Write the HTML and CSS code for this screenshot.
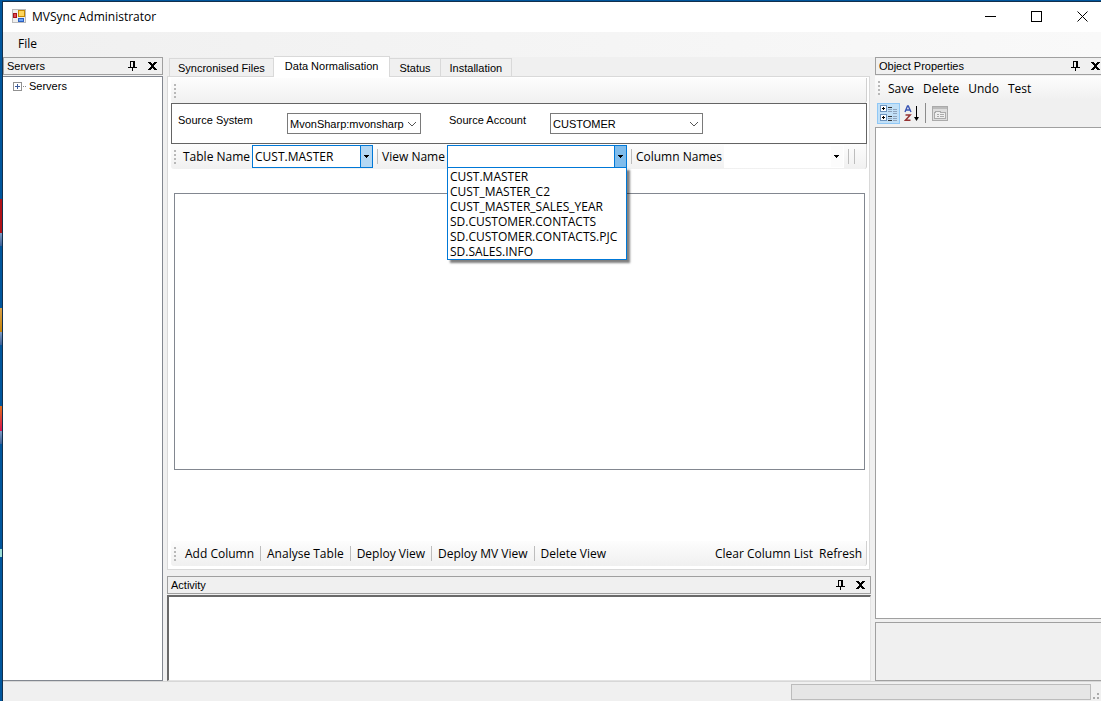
FILE: index.html
```html
<!DOCTYPE html>
<html lang="en">
<head>
    <meta charset="UTF-8">
    <title>MVSync Administrator</title>
    <link rel="stylesheet" href="styles.css">
</head>
<body>

<!-- shared icons -->
<svg class="defs" width="0" height="0">
    <symbol id="pin" viewBox="0 0 9 10" shape-rendering="crispEdges">
        <path d="M2 0h5v6h2v1H5v3H4V7H0V6h2zM3 1v5h2V1z" fill-rule="evenodd"/>
    </symbol>
    <symbol id="close" viewBox="0 0 9 8" shape-rendering="crispEdges">
        <path d="M0 0h3v1h1v1h1V1h1V0h3v1H8v1H7v1H6v2h1v1h1v1h1v1H6V7H5V6H4v1H3v1H0V7h1V6h1V5h1V3H2V2H1V1H0z"/>
    </symbol>
    <symbol id="chevron" viewBox="0 0 10 6">
        <path d="M1 1l4 4 4-4" fill="none" stroke="#555"/>
    </symbol>
    <symbol id="arrow" viewBox="0 0 5 3" shape-rendering="crispEdges">
        <path d="M0 0h5v1H4v1H3v1H2V2H1V1H0z"/>
    </symbol>
</svg>

<div class="window">
    <header class="titlebar">
        <svg class="logo" width="14" height="14" viewBox="0 0 14 14">
            <rect x=".5" y=".5" width="13" height="13" fill="#eee" stroke="#bbb"/>
            <rect x="6.500" y="1.500" width="6" height="6" fill="#ffd65c" stroke="#c58a00"/>
            <rect x="1.500" y="4.500" width="3" height="4" fill="#e0474f" stroke="#a5141b"/>
            <rect x="6.500" y="9.500" width="5" height="3" fill="#6ba4f5" stroke="#2a5fc0"/>
        </svg>
        <h1>MVSync Administrator</h1>
        <div class="win-buttons">
            <button aria-label="Minimize"><svg width="11" height="11" shape-rendering="crispEdges"><path d="M0 5h11v1H0z"/></svg></button>
            <button aria-label="Maximize"><svg width="11" height="11"><rect x=".5" y=".5" width="10" height="10" fill="none" stroke="#000"/></svg></button>
            <button aria-label="Close"><svg width="11" height="11"><path d="M.5 .5l10 10M10.500 .5l-10 10" stroke="#000"/></svg></button>
        </div>
    </header>

    <nav class="menubar"><button>File</button></nav>

    <main class="workspace">
        <section class="servers">
            <div class="dock-title">
                <h2>Servers</h2>
                <button aria-label="Pin"><svg width="9" height="10"><use href="#pin"/></svg></button>
                <button aria-label="Close"><svg width="9" height="8"><use href="#close"/></svg></button>
            </div>
            <ul class="tree">
                <li>
                    <svg width="13" height="9" shape-rendering="crispEdges">
                        <rect x=".5" y=".5" width="8" height="8" fill="#fff" stroke="#919191"/>
                        <path d="M2 4h5v1H2zM4 2h1v5H4z" fill="#3b5a9a"/>
                        <path d="M10 4h1v1h-1zM12 4h1v1h-1z" fill="#888"/>
                    </svg>
                    <span>Servers</span>
                </li>
            </ul>
        </section>

        <section class="center">
            <div class="tabs" role="tablist">
                <button role="tab">Syncronised Files</button>
                <button role="tab" class="active" aria-selected="true">Data Normalisation</button>
                <button role="tab">Status</button>
                <button role="tab">Installation</button>
            </div>
            <div class="tab-page">
                <div class="toolbar"><i class="grip"></i></div>
                <div class="source">
                    <label for="system">Source System</label>
                    <div class="combo system">
                        <select id="system"><option>MvonSharp:mvonsharp</option></select>
                        <svg width="10" height="6"><use href="#chevron"/></svg>
                    </div>
                    <label for="account" class="account-label">Source Account</label>
                    <div class="combo account">
                        <select id="account"><option>CUSTOMER</option></select>
                        <svg width="10" height="6"><use href="#chevron"/></svg>
                    </div>
                </div>
                <div class="toolbar">
                    <i class="grip"></i>
                    <label for="table">Table Name</label>
                    <div class="tool-combo table">
                        <input id="table" type="text" value="CUST.MASTER">
                        <button aria-label="Show tables"><svg width="5" height="3"><use href="#arrow"/></svg></button>
                    </div>
                    <i class="sep"></i>
                    <label for="view">View Name</label>
                    <div class="tool-combo view">
                        <input id="view" type="text" role="combobox" aria-expanded="true" aria-controls="views">
                        <button aria-label="Show views"><svg width="5" height="3"><use href="#arrow"/></svg></button>
                        <ul class="dropdown" id="views" role="listbox">
                            <li role="option">CUST.MASTER</li>
                            <li role="option">CUST_MASTER_C2</li>
                            <li role="option">CUST_MASTER_SALES_YEAR</li>
                            <li role="option">SD.CUSTOMER.CONTACTS</li>
                            <li role="option">SD.CUSTOMER.CONTACTS.PJC</li>
                            <li role="option">SD.SALES.INFO</li>
                        </ul>
                    </div>
                    <i class="sep"></i>
                    <label for="columns">Column Names</label>
                    <div class="tool-combo columns">
                        <input id="columns" type="text">
                        <button aria-label="Show columns"><svg width="5" height="3"><use href="#arrow"/></svg></button>
                    </div>
                    <i class="sep"></i>
                    <i class="sep"></i>
                </div>
                <div class="column-list"></div>
                <div class="toolbar">
                    <i class="grip"></i>
                    <button>Add Column</button>
                    <i class="sep"></i>
                    <button>Analyse Table</button>
                    <i class="sep"></i>
                    <button>Deploy View</button>
                    <i class="sep"></i>
                    <button>Deploy MV View</button>
                    <i class="sep"></i>
                    <button>Delete View</button>
                    <button class="push">Clear Column List</button>
                    <button class="last">Refresh</button>
                </div>
            </div>
            <div class="dock-title">
                <h2>Activity</h2>
                <button aria-label="Pin"><svg width="9" height="10"><use href="#pin"/></svg></button>
                <button aria-label="Close"><svg width="9" height="8"><use href="#close"/></svg></button>
            </div>
            <div class="activity-log"></div>
        </section>

        <section class="properties">
            <div class="dock-title">
                <h2>Object Properties</h2>
                <button aria-label="Pin"><svg width="9" height="10"><use href="#pin"/></svg></button>
                <button aria-label="Close"><svg width="9" height="8"><use href="#close"/></svg></button>
            </div>
            <div class="toolbar">
                <i class="grip"></i>
                <button>Save</button>
                <button>Delete</button>
                <button>Undo</button>
                <button>Test</button>
            </div>
            <div class="grid-tools">
                <button class="on" aria-label="Categorized">
                    <svg width="17" height="16" shape-rendering="crispEdges">
                        <rect x=".5" y=".5" width="6" height="6" rx="1" fill="#fff" stroke="#6d93bd"/>
                        <rect x=".5" y="9.500" width="6" height="6" rx="1" fill="#fff" stroke="#6d93bd"/>
                        <path d="M2 3h3v1H2zM3 2h1v3H3zM2 12h3v1H2zM3 11h1v3H3z"/>
                        <path d="M8 2.500h4M8 11.500h4M8 15.500h4" stroke="#333"/>
                        <path d="M8 4.500h4M8 6.500h4M8 13.500h4M13 4.500h4M13 6.500h4M13 8.500h4M13 11.500h4M13 13.500h4M13 15.500h4" stroke="#8fa3bb"/>
                    </svg>
                </button>
                <button aria-label="Alphabetical">
                    <svg width="16" height="17">
                        <path d="M1 7l2.500-6h.8L7 7M2 5h4" fill="none" stroke="#3a55b4" stroke-width="1.400"/>
                        <path d="M1.500 10h4.700L1.500 15.300h5" fill="none" stroke="#963434" stroke-width="1.500"/>
                        <path d="M12 1h1v11h2l-2.500 4-2.500-4h2z"/>
                    </svg>
                </button>
                <i class="sep"></i>
                <button aria-label="Property Pages">
                    <svg width="16" height="15" shape-rendering="crispEdges">
                        <rect x=".5" y=".5" width="15" height="14" fill="#ddd" stroke="#aaa"/>
                        <path d="M1 1h14v2H1z" fill="#bbb"/>
                        <path d="M2.500 6.500v6h11v-6h-5v-1h-5v1z" fill="#eee" stroke="#aaa"/>
                        <path d="M5 8.500h2M8 8.500h4M5 10.500h2M8 10.500h4" stroke="#aaa"/>
                    </svg>
                </button>
            </div>
            <div class="prop-grid"></div>
            <div class="prop-help"></div>
        </section>
    </main>

    <footer class="statusbar">
        <div class="progress"></div>
        <svg width="7" height="7" shape-rendering="crispEdges"><path d="M4 0h2v2H4zM4 4h2v2H4zM0 4h2v2H0z" fill="#aaa"/></svg>
    </footer>
</div>

</body>
</html>
```
FILE: styles.css
```css
* {
    box-sizing: border-box;
    margin: 0;
    padding: 0;
}
body {
    height: 100vh;
    padding: 1px 0 0 2px;
    overflow: hidden;
    background: #00569d;
    /* desktop icons peeking out behind the window */
    background: linear-gradient(#00569d 199px, #b01218 199px, #b01218 233px, #7f9cc4 233px, #3b5f96 246px, #00569d 246px, #00569d 308px, #d8a04a 308px, #c78408 332px, #7f9cc4 332px, #3b5f96 345px, #00569d 345px, #00569d 406px, #e0701c 406px, #d81450 431px, #7f9cc4 431px, #3b5f96 444px, #00569d 444px, #00569d 549px, #9adfd8 549px, #9adfd8 557px, #00569d 557px);
    color: #000;
    font-family: "Liberation Sans", Arial, sans-serif;
    font-size: 11px;
}
button, input, select {
    border: 0;
    background: none;
    color: inherit;
    font: inherit;
    outline: 0;
}
svg {
    display: block;
}
ul {
    list-style: none;
}
.defs {
    position: absolute;
}
.window {
    display: flex;
    flex-direction: column;
    height: 100%;
    overflow: hidden;
    border-top: 1px solid #12304d;
    border-left: 1px solid #12304d;
    background: #f0f0f0;
}

/* title and menu */
.titlebar {
    display: flex;
    align-items: center;
    height: 30px;
    padding: 0 0 2px 9px;
    background: #fff;
}
.titlebar h1 {
    flex: 1;
    margin-left: 6px;
    font: 12px "Open Sans", "Noto Sans", sans-serif;
}
.win-buttons {
    display: flex;
    margin-right: -4px;
}
.win-buttons button {
    display: flex;
    justify-content: center;
    width: 46px;
}
.menubar {
    display: flex;
    height: 25px;
    padding: 0 0 2px 15px;
    background: linear-gradient(to right, #f0f0f0, #f9f9f9);
}
.menubar button,
.toolbar {
    font: 12px "Open Sans", "Noto Sans", sans-serif;
}

/* docked panels */
.workspace {
    display: flex;
    flex: 1;
    gap: 4px;
    min-height: 0;
}
.servers, .center, .properties {
    display: flex;
    flex-direction: column;
}
.servers {
    width: 160px;
}
.center {
    flex: 1;
    min-width: 0;
}
.properties {
    width: 226px;
}
.dock-title {
    display: flex;
    flex-shrink: 0;
    align-items: center;
    height: 18px;
    padding: 0 5px 0 3px;
    border: 1px solid #a0a0a0;
    margin-bottom: 1px;
}
.properties .dock-title {
    padding-right: 1px;
    border-right: 0;
}
.dock-title h2 {
    flex: 1;
    font-size: 11px;
    font-weight: normal;
}
.dock-title button {
    margin-left: 11px;
}
.tree {
    flex: 1;
    padding: 1px 9px;
    border: 1px solid #828790;
    border-left: 0;
    background: #fff;
}
.tree li {
    display: flex;
    align-items: center;
    gap: 3px;
    height: 16px;
    padding-left: 1px;
}

/* tabs */
.tabs {
    display: flex;
    align-items: flex-end;
    height: 19px;
    padding-left: 2px;
}
.tabs button {
    height: 18px;
    padding: 0 9px;
    border: 1px solid #d9d9d9;
    border-bottom: 0;
    border-left: 0;
    white-space: nowrap;
}
.tabs button:first-child {
    padding: 0 8px;
    border-left: 1px solid #d9d9d9;
}
.tabs .active {
    z-index: 1;
    height: 21px;
    padding: 0 11px 2px;
    margin-bottom: -1px;
    background: #fff;
}
.tab-page {
    display: flex;
    flex: 1;
    flex-direction: column;
    padding: 1px 2px 3px 3px;
    margin: 0 1px 6px 0;
    border: 1px solid #d9d9d9;
    background: #fff;
}
.toolbar {
    display: flex;
    flex-shrink: 0;
    align-items: center;
    height: 25px;
    padding-left: 3px;
    border-right: 1px solid #d0d0d0;
    border-radius: 0 0 3px 3px;
    background: linear-gradient(#fdfdfd, #f0f0f0);
    white-space: nowrap;
}
.grip {
    width: 2px;
    height: 14px;
    margin-right: 7px;
    background: repeating-linear-gradient(#b8b8b8 0 2px, transparent 2px 4px);
}
.sep {
    width: 1px;
    height: 15px;
    margin: 0 4px;
    background: #bdbdbd;
}
.sep + .sep {
    margin-left: 1px;
}
.toolbar > button {
    padding: 0 2px;
}
.push {
    margin: 0 2px 0 auto;
}
.last {
    margin-right: 2px;
}
.source {
    display: flex;
    flex-shrink: 0;
    height: 41px;
    padding: 9px 6px;
    border: 1px solid #646464;
}
.source label {
    width: 109px;
    padding-top: 1px;
}
.source .account-label {
    width: 101px;
    margin-left: 28px;
}

/* the select and its chevron share one cell */
.combo {
    display: grid;
    align-items: center;
    height: 21px;
    border: 1px solid #7a7a7a;
    background: #fff;
}
.combo select, .combo svg {
    grid-area: 1 / 1;
}
.combo select {
    width: 100%;
    height: 19px;
    padding-left: 2px;
    appearance: none;
}
.combo svg {
    justify-self: end;
    margin-right: 3px;
    pointer-events: none;
}
.system {
    width: 134px;
}
.account {
    width: 153px;
}
.tool-combo {
    position: relative;
    display: flex;
    height: 23px;
    margin-left: 2px;
    border: 1px solid #0078d7;
    background: #fff;
}
.tool-combo input {
    flex: 1;
    min-width: 0;
    padding-left: 2px;
}
.tool-combo button {
    display: flex;
    align-items: center;
    justify-content: center;
    width: 12px;
    border-left: 1px solid #0078d7;
    background: #b3d7f3;
}
.table {
    width: 121px;
}
.view {
    width: 180px;
}
.view button {
    background: #80bceb;
}
.columns {
    width: 120px;
    border-color: transparent;
}
.columns button {
    border: 0;
    background: #fcfcfc;
}
.dropdown {
    position: absolute;
    z-index: 2;
    top: 21px;
    left: -1px;
    right: -1px;
    padding-top: 1px;
    border: 1px solid #0078d7;
    background: #fff;
    box-shadow: 3px 3px 2px rgba(0, 0, 0, .5);
}
.dropdown li {
    height: 15px;
    padding-left: 2px;
    line-height: 15px;
}
.column-list {
    flex: 1;
    margin: 24px 2px 71px 3px;
    border: 1px solid #828790;
}
.activity-log {
    height: 86px;
    border: 1px solid #e3e3e3;
    border-top: 2px solid #696969;
    border-left: 2px solid #696969;
    background: #fff;
}

/* object properties */
.properties .toolbar {
    gap: 5px;
    height: 24px;
    border-right: 0;
}
.properties .grip {
    margin-right: 1px;
}
.grid-tools {
    display: flex;
    align-items: center;
    height: 27px;
    padding: 0 0 1px 2px;
}
.grid-tools button {
    display: flex;
    align-items: center;
    justify-content: center;
    width: 23px;
    height: 21px;
}
.grid-tools .on {
    border: 1px solid #90c8f6;
    background: #c2e0f7;
}
.grid-tools .sep {
    height: 20px;
    margin: 0 2px;
    background: #8c8c8c;
}
.prop-grid {
    flex: 1;
    border: 1px solid #a0a0a0;
    border-right: 0;
    background: #fff;
}
.prop-help {
    height: 59px;
    margin-top: 3px;
    border: 1px solid #a0a0a0;
    border-right: 0;
}
.statusbar {
    display: flex;
    flex-shrink: 0;
    align-items: flex-end;
    justify-content: flex-end;
    gap: 2px;
    height: 20px;
    padding: 0 1px 1px 0;
    border-top: 1px solid #d7d7d7;
}
.progress {
    width: 300px;
    height: 16px;
    border: 1px solid #bcbcbc;
    background: #e6e6e6;
}
```
